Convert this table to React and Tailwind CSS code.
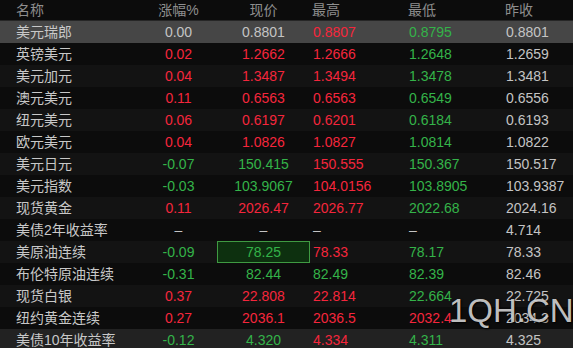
const R = 'text-[#f5263c]';
const G = 'text-[#34b349]';
const N = 'text-[#c4c4c4]';

const rows = [
  ['美元瑞郎', ['0.00', N], ['0.8801', N], ['0.8807', R], ['0.8795', G], '0.8801'],
  ['英镑美元', ['0.02', R], ['1.2662', R], ['1.2666', R], ['1.2648', G], '1.2659'],
  ['美元加元', ['0.04', R], ['1.3487', R], ['1.3494', R], ['1.3478', G], '1.3481'],
  ['澳元美元', ['0.11', R], ['0.6563', R], ['0.6563', R], ['0.6549', G], '0.6556'],
  ['纽元美元', ['0.06', R], ['0.6197', R], ['0.6201', R], ['0.6184', G], '0.6193'],
  ['欧元美元', ['0.04', R], ['1.0826', R], ['1.0827', R], ['1.0814', G], '1.0822'],
  ['美元日元', ['-0.07', G], ['150.415', G], ['150.555', R], ['150.367', G], '150.517'],
  ['美元指数', ['-0.03', G], ['103.9067', G], ['104.0156', R], ['103.8905', G], '103.9387'],
  ['现货黄金', ['0.11', R], ['2026.47', R], ['2026.77', R], ['2022.68', G], '2024.16'],
  ['美债2年收益率', ['–', N], ['–', N], ['–', N], ['–', N], '4.714'],
  ['美原油连续', ['-0.09', G], ['78.25', G], ['78.33', R], ['78.17', G], '78.33'],
  ['布伦特原油连续', ['-0.31', G], ['82.44', G], ['82.49', G], ['82.39', G], '82.46'],
  ['现货白银', ['0.37', R], ['22.808', R], ['22.814', R], ['22.664', G], '22.725'],
  ['纽约黄金连续', ['0.27', R], ['2036.1', R], ['2036.5', R], ['2032.4', R], '2034.3'],
  ['美债10年收益率', ['-0.12', G], ['4.320', G], ['4.334', R], ['4.311', G], '4.325'],
];

function rowBg(i) {
  if (i === 0) return 'bg-[#464646]';
  if (i === rows.length - 1) return 'bg-[#222222]';
  return i % 2 === 0 ? 'bg-[#131313]' : 'bg-[#0c0c0c]';
}

export default function App() {
  return (
    <div
      className="relative w-[573px] h-[348px] overflow-hidden bg-[#0c0c0c] text-[14px] leading-none"
      style={{ fontFamily: '"Liberation Sans", "Noto Sans CJK SC", sans-serif' }}
    >
      {/* header */}
      <div className="flex items-center h-[21px] border-b border-[#262626] text-[#8e8e8e]">
        <div className="w-[140px] pl-[16px]">名称</div>
        <div className="w-[77px] text-center">涨幅%</div>
        <div className="w-[93px] text-center">现价</div>
        <div className="w-[96px] pl-[2px]">最高</div>
        <div className="w-[97px] pl-[2px]">最低</div>
        <div className="flex-1 pl-[2px]">昨收</div>
      </div>

      {rows.map((r, i) => (
        <div key={r[0]} className={`flex items-center h-[22px] ${rowBg(i)}`}>
          <div className="w-[140px] pl-[16px] text-[#c8c8c8] whitespace-nowrap">{r[0]}</div>
          <div className={`w-[77px] text-center ${r[1][1]}`}>{r[1][0]}</div>
          <div
            className={`w-[93px] h-full flex items-center justify-center ${r[2][1]} ${
              i === 10 ? 'bg-[#0d300f] border border-[#3f9a42]' : ''
            }`}
          >
            {r[2][0]}
          </div>
          <div className={`w-[96px] pl-[3px] ${r[3][1]}`}>{r[3][0]}</div>
          <div className={`w-[97px] pl-[3px] ${r[4][1]}`}>{r[4][0]}</div>
          <div className="flex-1 pl-[3px] text-[#c4c4c4]">{r[5]}</div>
        </div>
      ))}

      {/* watermark */}
      <div className="absolute left-[449px] top-[294px] text-[33px] leading-none text-[#d8d8d8]/90 [text-shadow:1px_1px_2px_#000]">
        1QH.CN
      </div>
    </div>
  );
}
